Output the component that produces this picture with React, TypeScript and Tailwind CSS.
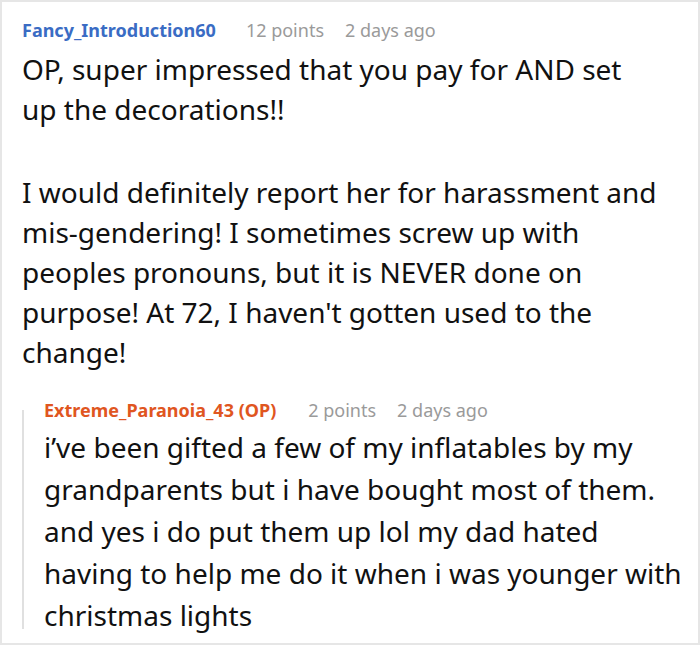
import React from "react";

const font = { fontFamily: '"Noto Sans", "Open Sans", sans-serif' };

export default function App() {
  return (
    <div className="w-[700px] h-[646px] bg-white" style={font}>
      <div className="w-[700px] h-[645px] border-2 border-[#e6e6e6] pl-[20px] pr-[10px] pt-[17px]">
        <div className="flex items-baseline h-[22px] leading-[22px] whitespace-nowrap">
          <span className="text-[18px] font-bold text-[#3a6cc4]">Fancy_Introduction60</span>
          <span className="ml-[30px] text-[18px] text-[#9a9a9a]">12 points</span>
          <span className="ml-[21px] text-[18px] text-[#9a9a9a]">2 days ago</span>
        </div>
        <div className="mt-[8px] pr-[28px] text-[28px] leading-[40px] text-[#111]">
          <p>OP, super impressed that you pay for AND set up the decorations!!</p>
          <p className="mt-[43px]">
            I would definitely report her for harassment and mis-gendering! I sometimes screw up with peoples pronouns, but it is NEVER done on purpose! At 72, I haven't gotten used to the change!
          </p>
        </div>
        <div className="flex mt-[27px]">
          <div className="w-[2px] bg-[#e0e0e0] mt-[11px] mb-[7px] shrink-0" />
          <div className="pl-[20px] flex-1">
            <div className="flex items-baseline h-[22px] leading-[22px] whitespace-nowrap">
              <span className="text-[18px] font-bold text-[#e0561f]">Extreme_Paranoia_43 (OP)</span>
              <span className="ml-[32px] text-[18px] text-[#9a9a9a]">2 points</span>
              <span className="ml-[21px] text-[18px] text-[#9a9a9a]">2 days ago</span>
            </div>
            <p className="mt-[5px] text-[28px] leading-[42px] text-[#111]">
              i’ve been gifted a few of my inflatables by my grandparents but i have bought most of them. and yes i do put them up lol my dad hated having to help me do it when i was younger with christmas lights
            </p>
          </div>
        </div>
      </div>
    </div>
  );
}
